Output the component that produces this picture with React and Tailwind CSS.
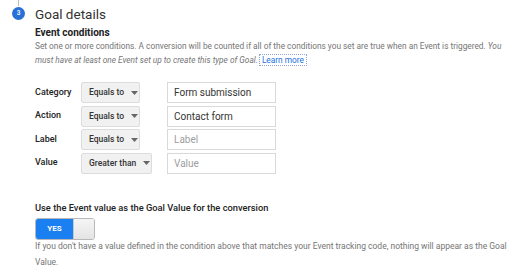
import React from "react";

const rows = [
  { label: "Category", op: "Equals to", value: "Form submission", placeholder: false, wide: false },
  { label: "Action", op: "Equals to", value: "Contact form", placeholder: false, wide: false },
  { label: "Label", op: "Equals to", value: "Label", placeholder: true, wide: false },
  { label: "Value", op: "Greater than", value: "Value", placeholder: true, wide: true },
];

const Caret = () => (
  <svg width="7" height="4" viewBox="0 0 7 4" className="ml-[7px]">
    <path d="M0 0 L7 0 L3.5 4 Z" fill="#666" />
  </svg>
);

const ConditionRow = ({ row }) => (
  <div className="flex items-center h-[21px]">
    <span className="w-[46px] text-[9px] font-medium text-[#222]">{row.label}</span>
    <div
      className={`${row.wide ? "w-[71px]" : "w-[59px]"} h-[21px] flex items-center pl-[7px] bg-[#f1f1f1] border border-[#dcdcdc] rounded-[2px] text-[8.5px] font-medium text-[#333]`}
    >
      {row.op}
      <Caret />
    </div>
    <div
      className={`${row.wide ? "ml-[15px]" : "ml-[27px]"} w-[109px] h-[21px] flex items-center pl-[6px] border border-[#d9d9d9] bg-white text-[10px] ${
        row.placeholder ? "text-[#9e9e9e]" : "text-[#333]"
      }`}
    >
      {row.value}
    </div>
  </div>
);

export default function App() {
  return (
    <div className="w-[512px] h-[273px] bg-white overflow-hidden font-['Roboto',sans-serif] relative">
      <div className="absolute left-[17.5px] top-0 w-px h-[6px] bg-[#bdbdbd]" />
      <div className="flex pt-[6px] pl-[12px]">
        <div className="w-[13px] h-[13px] rounded-full bg-[#2a6fd6] flex items-center justify-center text-white text-[6.5px] font-medium mt-[1px]">
          3
        </div>
        <div className="ml-[10px] flex flex-col">
          <h1 className="text-[13.5px] leading-[16px] text-[#333]">Goal details</h1>
          <h2 className="mt-[5px] text-[10px] leading-[12px] font-bold text-[#222]">Event conditions</h2>
          <p className="mt-[0px] w-[474px] text-[8.3px] leading-[14px] text-[#757575]">
            Set one or more conditions. A conversion will be counted if all of the conditions you set are true when an Event is triggered.{" "}
            <i>You must have at least one Event set up to create this type of Goal.</i>
            <a className="ml-[1px] px-[2px] text-[#1a6ee0] border border-dotted border-[#8fa6d6]">Learn more</a>
          </p>
          <div className="mt-[15px] flex flex-col gap-[2.5px]">
            {rows.map((row) => (
              <ConditionRow key={row.label} row={row} />
            ))}
          </div>
          <h3 className="mt-[28px] text-[9.3px] leading-[12px] font-medium text-[#222]">
            Use the Event value as the Goal Value for the conversion
          </h3>
          <div className="mt-[4px] flex w-[60px] h-[22px] rounded-[3px] overflow-hidden border border-[#b8b8b8]">
            <div className="w-[37px] bg-[#1a7ff0] flex items-center justify-center text-white text-[8px] font-bold">
              YES
            </div>
            <div className="flex-1 bg-gradient-to-b from-[#f5f5f5] to-[#e4e4e4] border-l border-[#c8c8c8]" />
          </div>
          <p className="mt-[-2px] w-[474px] text-[8.5px] leading-[16px] text-[#757575]">
            If you don't have a value defined in the condition above that matches your Event tracking code, nothing will appear as the Goal Value.
          </p>
        </div>
      </div>
    </div>
  );
}
